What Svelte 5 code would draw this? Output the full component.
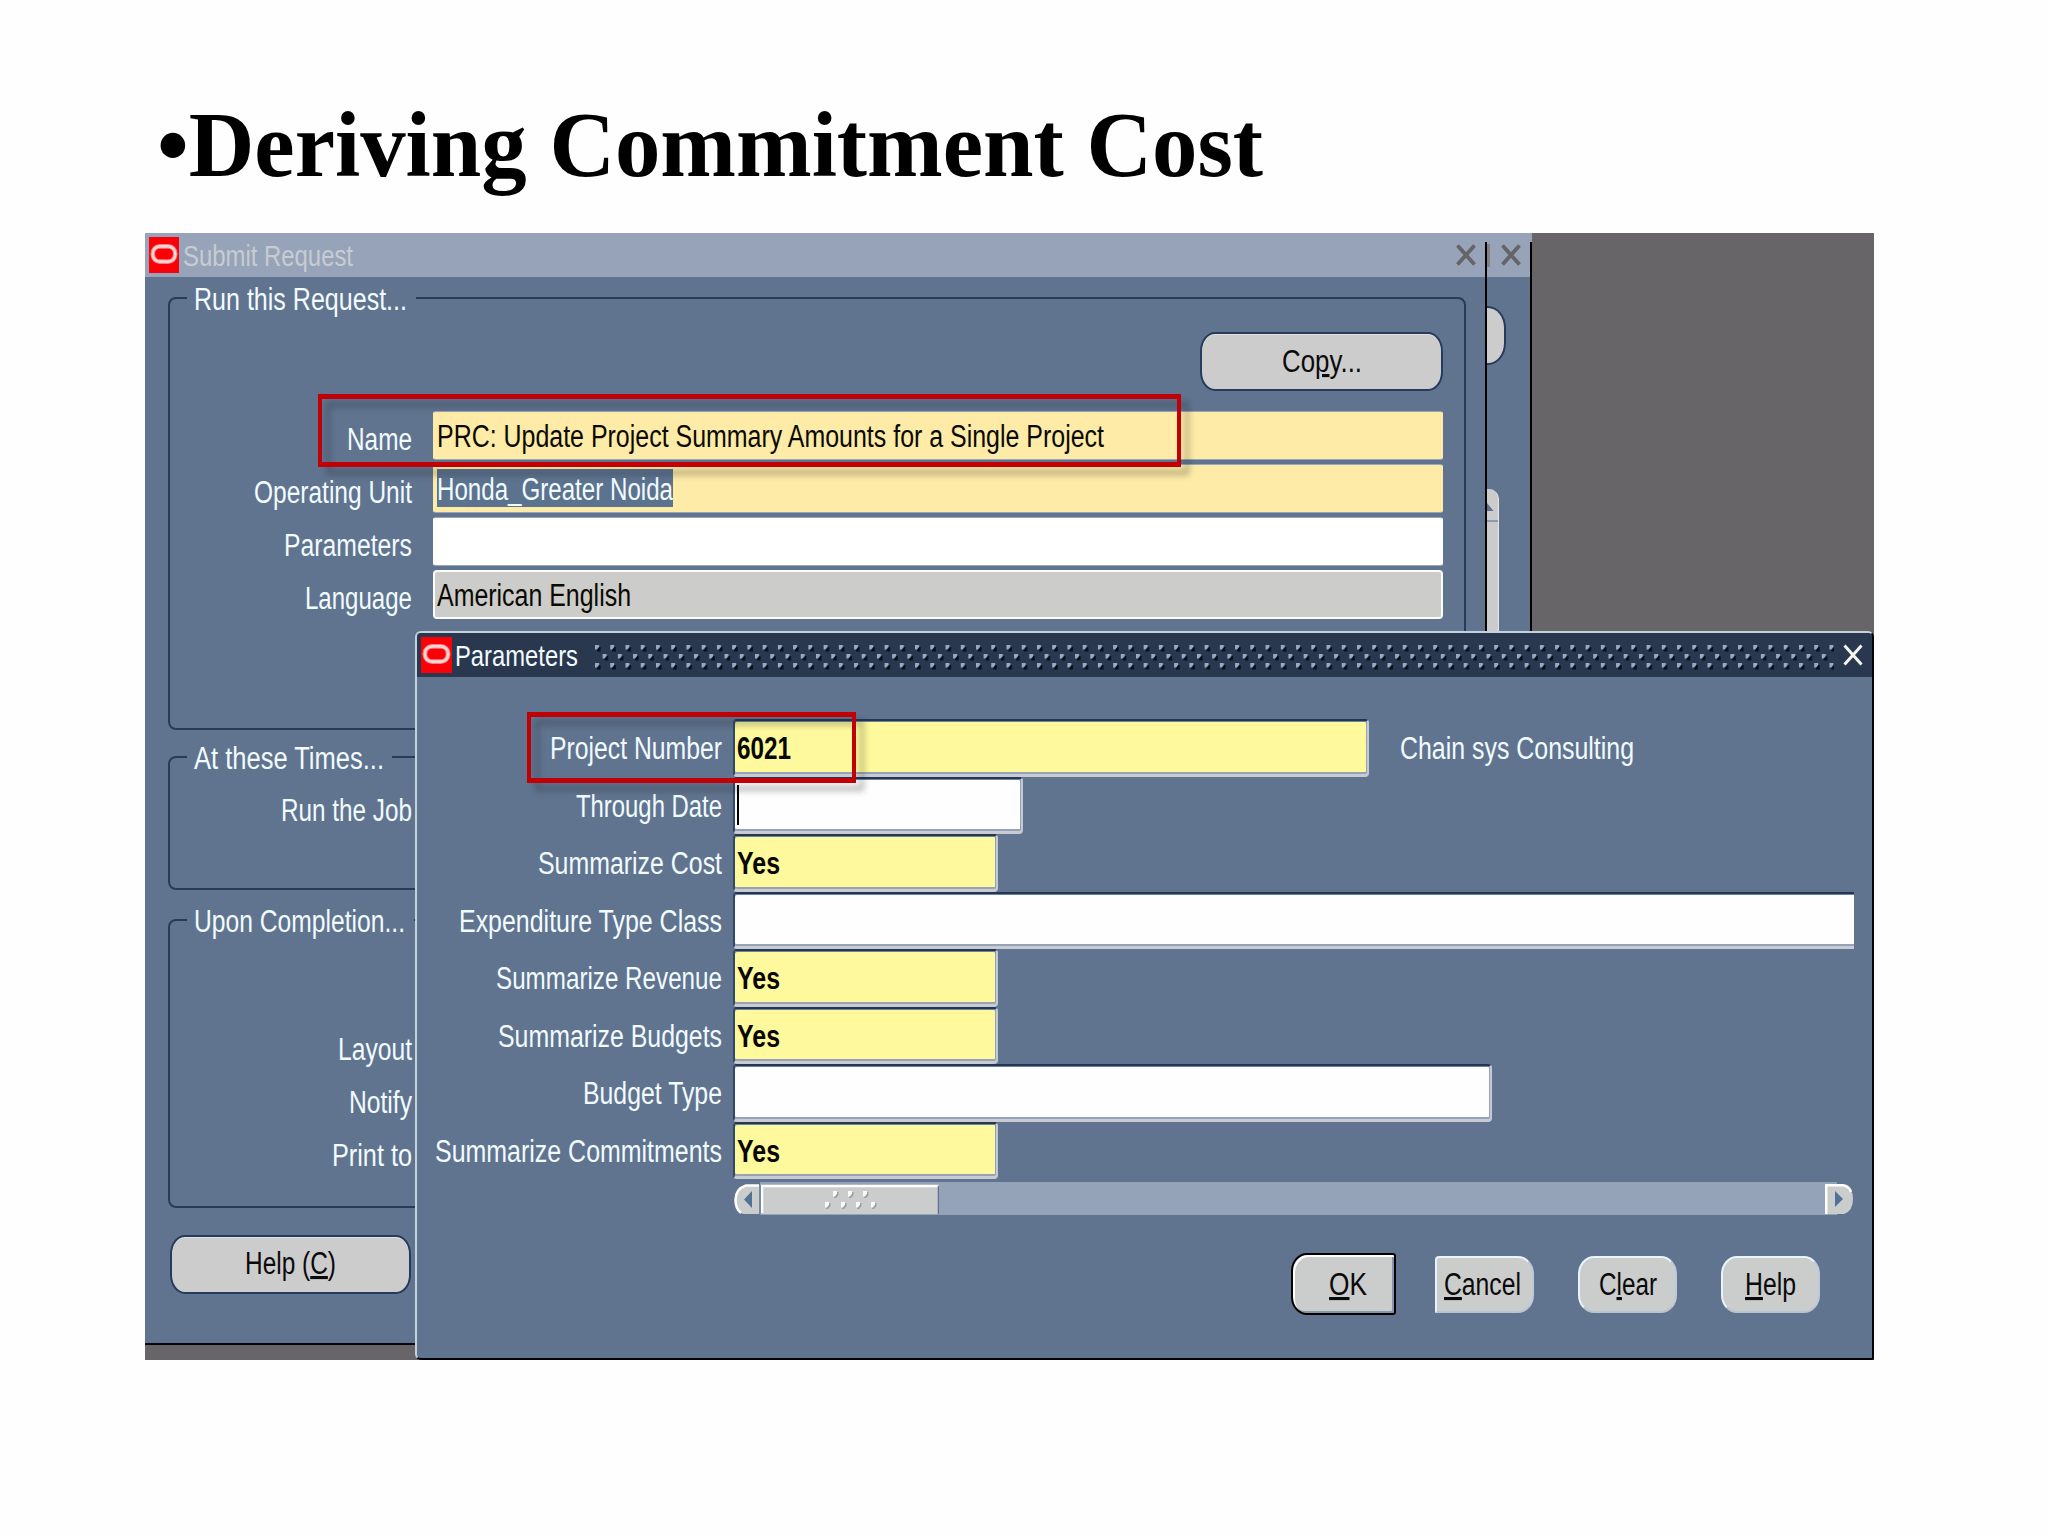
<script>
  const requestRows = [
    { label: 'Name', lw: 65, value: 'PRC: Update Project Summary Amounts for a Single Project', vw: 667, kind: 'required' },
    { label: 'Operating Unit', lw: 158, value: 'Honda_Greater Noida', vw: 236, kind: 'required', selected: true },
    { label: 'Parameters', lw: 128, value: '', vw: 0, kind: 'plain' },
    { label: 'Language', lw: 107, value: 'American English', vw: 194, kind: 'readonly' }
  ];

  const paramRows = [
    { label: 'Project Number', lw: 172, value: '6021', vw: 54, width: 636, kind: 'yellow', note: 'Chain sys Consulting' },
    { label: 'Through Date', lw: 146, value: '', vw: 0, width: 290, kind: 'white', caret: true },
    { label: 'Summarize Cost', lw: 184, value: 'Yes', vw: 43, width: 265, kind: 'yellow' },
    { label: 'Expenditure Type Class', lw: 263, value: '', vw: 0, width: 1121, kind: 'white', clipped: true },
    { label: 'Summarize Revenue', lw: 226, value: 'Yes', vw: 43, width: 265, kind: 'yellow' },
    { label: 'Summarize Budgets', lw: 224, value: 'Yes', vw: 43, width: 265, kind: 'yellow' },
    { label: 'Budget Type', lw: 139, value: '', vw: 0, width: 759, kind: 'white' },
    { label: 'Summarize Commitments', lw: 287, value: 'Yes', vw: 43, width: 265, kind: 'yellow' }
  ];

  const completionRows = [
    { label: 'Layout', w: 74 },
    { label: 'Notify', w: 63 },
    { label: 'Print to', w: 80 }
  ];
</script>

{#snippet fit(text, w, cls = '')}
  <svg class="fit {cls}" width={w} height="30"><text x="0" y="22" textLength={w} lengthAdjust="spacingAndGlyphs">{text}</text></svg>
{/snippet}

{#snippet keyed(before, key, after, w)}
  <svg class="fit" width={w} height="30"><text x="0" y="22" textLength={w} lengthAdjust="spacingAndGlyphs">{before}<tspan class="key">{key}</tspan>{after}</text></svg>
{/snippet}

{#snippet logo(w)}
  <svg class="logo" width={w} height="36" viewBox="0 0 30 36" preserveAspectRatio="none">
    <rect width="30" height="36" fill="#fb0007" />
    <rect x="3.8" y="9.4" width="22.4" height="15.2" rx="7" fill="none" stroke="#ff8080" stroke-width="4.6" />
    <rect x="3.8" y="9.4" width="22.4" height="15.2" rx="7" fill="none" stroke="#ffd6d6" stroke-width="2.6" />
  </svg>
{/snippet}

{#snippet cross()}
  <svg class="cross" width="20" height="22" viewBox="0 0 20 22"><path d="M1.5 1.5 L18.5 20.5 M18.5 1.5 L1.5 20.5" /></svg>
{/snippet}

<main class="slide">
  <h1>
    <svg width="1112" height="125"><text x="0" y="96" textLength="1106" lengthAdjust="spacingAndGlyphs">•Deriving Commitment Cost</text></svg>
  </h1>

  <section class="desktop">
    <div class="window back">
      <header class="titlebar dim"><span class="sliver"></span>{@render cross()}</header>
      <div class="back-button"></div>
      <div class="back-scroll">
        <svg width="14" height="34" viewBox="0 0 14 34"><path d="M0 14 L6.5 22 H0 Z" fill="#5c7391" /><path d="M0 32 H14" stroke="#8a9bb3" stroke-width="2" /></svg>
      </div>
    </div>

    <div class="window request">
      <header class="titlebar dim">
        {@render logo(30)}
        {@render fit('Submit Request', 170, 'caption')}
        <span class="grow"></span>
        {@render cross()}
      </header>

      <section class="group first">
        <div class="legend l1">{@render fit('Run this Request...', 213)}</div>
        <button class="pill copy">{@render keyed('Co', 'p', 'y...', 80)}</button>
        <div class="rows">
          {#each requestRows as row}
            <div class="row">
              <div class="label">{@render fit(row.label, row.lw)}</div>
              <div class="field {row.kind}">
                {#if row.value}
                  <span class="value" class:selected={row.selected}>{@render fit(row.value, row.vw)}</span>
                {/if}
              </div>
            </div>
          {/each}
        </div>
      </section>

      <section class="group second">
        <div class="legend l2">{@render fit('At these Times...', 190)}</div>
        <div class="label">{@render fit('Run the Job', 131)}</div>
      </section>

      <section class="group third">
        <div class="legend l3">{@render fit('Upon Completion...', 211)}</div>
        <div class="stack">
          {#each completionRows as row}
            <div class="label">{@render fit(row.label, row.w)}</div>
          {/each}
        </div>
      </section>

      <button class="pill help">{@render keyed('Help (', 'C', ')', 91)}</button>
    </div>

    <div class="window params">
      <header class="titlebar active">
        {@render logo(31)}
        {@render fit('Parameters', 123, 'caption')}
        <svg class="grip" width="1239" height="25">
          <defs>
            <pattern id="studs" width="15.24" height="18" patternUnits="userSpaceOnUse">
              <path d="M2 2h3.5v4.5h-3.5z M9.6 11h3.5v4.5h-3.5z" fill="#050d1d" />
              <path d="M0 0h4v2l-2 2.5h-2z M7.6 9h4v2l-2 2.5h-2z" fill="#9aabc1" />
            </pattern>
          </defs>
          <rect width="1239" height="25" fill="url(#studs)" />
        </svg>
        <span class="grow"></span>
        {@render cross()}
      </header>

      <div class="form">
        {#each paramRows as row}
          <div class="prow">
            <div class="label">{@render fit(row.label, row.lw)}</div>
            <div class="input {row.kind}" class:clipped={row.clipped} style:width="{row.width}px">
              {#if row.caret}<span class="caret"></span>{/if}
              {#if row.value}{@render fit(row.value, row.vw, 'strong')}{/if}
            </div>
            {#if row.note}<div class="note">{@render fit(row.note, 234)}</div>{/if}
          </div>
        {/each}
      </div>

      <div class="scrollbar">
        <svg width="205" height="34" viewBox="0 0 205 34">
          <rect width="26" height="34" fill="#607490" />
          <path d="M26 3 H12 Q1 6 1 18 Q1 29 9 32 H26 Z" fill="#cbcccc" />
          <path d="M25 3.5 H12 Q1.5 7 1.5 18 Q1.5 27 7 31" fill="none" stroke="#fff" stroke-width="2.5" />
          <path d="M18 9 V26 L10 17.5 Z" fill="#527196" />
          <rect x="26" y="3" width="179" height="29" fill="#cbcccc" />
          <path d="M28 31 V4 H204" fill="none" stroke="#fff" stroke-width="2.5" />
          <path d="M26 3 V32 M204.5 4 V32" stroke="#587292" stroke-width="1.5" />
          {#each [[99, 9], [114, 9], [129, 9], [91, 20], [107, 20], [122, 20], [137, 20]] as [x, y]}
            <path d="M{x + 2} {y + 1} h3.5 v3 l-2.5 3 h-2z" fill="#98a0a8" />
            <path d="M{x} {y} h4 v2.5 l-2 3 h-2z" fill="#fafafa" />
          {/each}
        </svg>
        <svg width="29" height="34" viewBox="0 0 29 34">
          <rect x="12" width="17" height="34" fill="#607490" />
          <path d="M0 2 H18 Q28 5 28 17 Q28 29 19 32 H0 Z" fill="#cbcccc" />
          <path d="M1.2 32 V3.2 H18 Q24 4 26 10" fill="none" stroke="#fff" stroke-width="2.5" />
          <path d="M10 9 V25 L18 17 Z" fill="#527196" />
        </svg>
      </div>

      <footer class="actions">
        <button class="act ok">{@render keyed('', 'O', 'K', 38)}</button>
        <button class="act cancel">{@render keyed('', 'C', 'ancel', 77)}</button>
        <button class="act">{@render keyed('C', 'l', 'ear', 58)}</button>
        <button class="act">{@render keyed('', 'H', 'elp', 51)}</button>
      </footer>
    </div>

    <div class="mark name-mark"></div>
    <div class="mark number-mark"></div>
  </section>
</main>

<style>
  :global(body) { background: #fff; }
  * { box-sizing: border-box; }
  .slide { width: 2048px; height: 1536px; background: #fefefe; overflow: hidden; }
  h1 { margin: 0; height: 233px; padding: 80px 0 0 157px; }
  h1 svg { overflow: visible; }
  h1 text { font: bold 93px 'Liberation Serif', serif; fill: #000; }
  svg { display: block; flex: none; }

  .desktop {
    position: relative;
    width: 1729px;
    height: 1127px;
    margin-left: 145px;
    background: #676567;
    font-family: 'Liberation Sans', sans-serif;
    overflow: hidden;
  }
  .window { position: absolute; background: #607490; display: flex; flex-direction: column; }
  .request { left: 0; top: 0; width: 1342px; height: 1112px; border-bottom: 2px solid #04060c; border-radius: 0 4px 0 0; }
  .request::after { content: ''; position: absolute; right: 0; top: 9px; bottom: 0; width: 2px; background: #000; }
  .back { left: 1342px; top: 0; width: 45px; height: 1112px; }
  .back::after { content: ''; position: absolute; right: 0; top: 9px; bottom: 0; width: 2px; background: #000; }
  .params {
    left: 270px;
    top: 398px;
    width: 1459px;
    height: 729px;
    border: 2px solid #c4d2de;
    border-right-color: #02040a;
    border-bottom-color: #02040a;
    border-radius: 6px 6px 2px 6px;
    overflow: hidden;
  }

  .titlebar { display: flex; align-items: flex-start; flex: none; height: 44px; padding: 4px 11px 0 4px; }
  .dim { background: #96a3b9; }
  .active { background: #29374f; padding: 4px 9px 0 4px; }
  .back .titlebar { padding: 4px 11px 0 0; justify-content: space-between; }
  .sliver { width: 3px; height: 23px; margin-top: 7px; background: #858287; }
  .grow { flex: 1; }
  .cross { margin-top: 7px; stroke: #656568; stroke-width: 3.8; }
  .active .cross { margin-top: 7px; stroke: #f5f5ef; stroke-width: 3; }
  .fit { overflow: visible; }
  .fit text { font-size: 31px; fill: #f2fbff; }
  .key { text-decoration: underline; text-decoration-thickness: 2px; text-decoration-skip-ink: none; }
  .caption { margin: 7px 0 0 4px; }
  .fit.caption text { font-size: 29px; }
  .dim .caption text { fill: #c6ccd1; }
  .active .caption { margin-left: 3px; }
  .grip { margin: 8px 0 0 17px; }

  .group {
    display: flex;
    flex-direction: column;
    flex: none;
    width: 1298px;
    margin-left: 23px;
    border: 2px solid #253c5d;
    border-radius: 8px;
  }
  .first { height: 433px; margin-top: 20px; }
  .second { height: 134px; margin-top: 26px; }
  .third { height: 289px; margin-top: 29px; }
  .legend { height: 30px; margin: -11px 0 0 17px; padding-left: 7px; background: #607490; }
  .l1 { width: 229px; }
  .l2 { width: 205px; }
  .l3 { width: 227px; }
  .label { display: flex; justify-content: flex-end; width: 242px; }
  .second .label { margin-top: 22px; }
  .stack { display: flex; flex-direction: column; gap: 23px; margin-top: 98px; }

  button { font: inherit; padding: 0; display: flex; justify-content: center; flex: none; }
  button .fit text { fill: #0a0a0a; }
  .pill { height: 59px; border: 2px solid #253c5d; border-radius: 15px / 19px; background: #cdcccd; box-shadow: inset 0 1px #e0e0e3; }
  .copy { width: 243px; margin: 14px 21px 0 0; padding-top: 16px; align-self: flex-end; }
  .help { width: 241px; margin: 27px 0 0 25px; padding-top: 15px; }

  .rows { display: flex; flex-direction: column; gap: 4px; margin-top: 20px; }
  .row { display: flex; height: 49px; }
  .row .label { padding-top: 17px; }
  .field { width: 1010px; margin-left: 21px; border-radius: 3px; border: 1px solid #96a5bb; border-left-color: #c9d0d8; }
  .required { background: #feeba7; border-left-color: #feeba7; border-right-color: #feeba7; }
  .plain { background: #fff; border-left-color: #fff; border-right-color: #fff; }
  .readonly { background: #cccccb; border: 2px solid #fdfdfd; border-radius: 4px; }
  .value { display: block; width: max-content; margin: 4px 0 0 3px; padding: 9px 0 0 0; height: 38px; }
  .readonly .value { margin: 3px 0 0 2px; }
  .field .fit text { fill: #0a0a00; }
  .selected { background: #5c7390; }
  .field .selected .fit text { fill: #f2fbff; }

  .back-button { width: 19px; height: 59px; margin-top: 29px; border: 2px solid #253c5d; border-left: 0; border-radius: 0 18px 18px 0 / 0 22px 22px 0; background: #cdcccd; }
  .back-scroll { width: 12px; height: 300px; margin-top: 124px; background: #cbcbcb; border-radius: 0 10px 0 0; border-right: 1px solid #e4e6e8; overflow: hidden; }

  .form { padding-top: 42px; }
  .prow { display: flex; height: 57.5px; }
  .prow .label { width: 305px; padding-top: 18px; }
  .input {
    margin-left: 11px;
    padding: 16px 0 0 2px;
    border-style: solid;
    border-width: 2px 2px 3px 2px;
    border-color: #253650 #c4cad4 #c8ccd2 #32486a;
    border-radius: 4px;
    box-shadow: inset 0 1px #6a83a3, inset 0 -2px #95a2b8, inset -1px 0 #95a2b8;
  }
  .yellow { background: #fef99c; }
  .white { background: #fefefe; }
  .clipped { border-right: 0; border-radius: 4px 0 0 4px; box-shadow: inset 0 1px #6a83a3, inset 0 -2px #95a2b8; }
  .strong text { font-weight: bold; }
  .input .strong text { fill: #080800; }
  .caret { display: block; width: 2px; height: 40px; margin: -10px 0 0 0; background: #000; }
  .note { margin-left: 31px; padding-top: 18px; }

  .scrollbar { display: flex; justify-content: space-between; width: 1120px; height: 33px; margin: 3px 0 0 317px; background: #95a3b8; }
  .actions { display: flex; align-items: center; height: 62px; margin: 38px 0 0 874px; }
  .act {
    width: 99px;
    height: 57px;
    padding-top: 15px;
    margin-left: 44px;
    border: 2px solid #e9f3fb;
    border-right-color: #bccbd8;
    border-bottom-color: #bac4ce;
    border-radius: 16px / 18px;
    background: #cbcccc;
  }
  .ok { width: 105px; height: 62px; margin-left: 0; padding: 18px 0 0 9px; border: 2px solid #000; border-radius: 16px 3px 3px 16px / 18px 3px 3px 18px; box-shadow: inset 2px 2px #fff, inset -2px -2px #8496ae; }
  .cancel { margin-left: 39px; padding-right: 4px; border-radius: 4px 16px 16px 0 / 4px 18px 18px 0; }

  .mark { position: absolute; border: solid #c00004; border-width: 5px 4px; filter: drop-shadow(8px 8px 3px rgba(30, 30, 30, 0.32)); }
  .name-mark { left: 173px; top: 161px; width: 863px; height: 73px; }
  .number-mark { left: 382px; top: 479px; width: 329px; height: 71px; }
</style>
